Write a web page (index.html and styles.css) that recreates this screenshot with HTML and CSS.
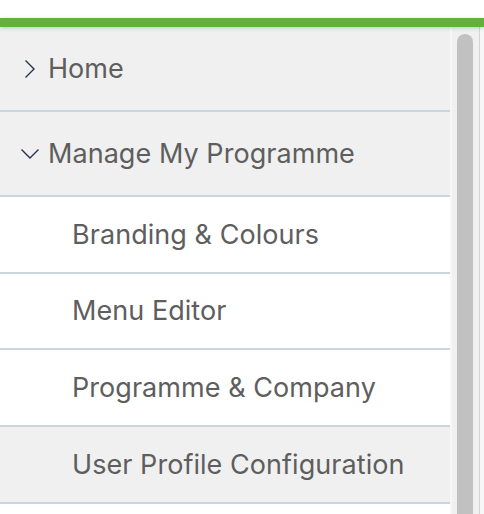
FILE: index.html
```html
<!DOCTYPE html>
<html lang="en">
<head>
<meta charset="utf-8">
<title>Menu</title>
<link rel="stylesheet" href="styles.css">
</head>
<body>
<div class="top"></div>
<div class="accent"></div>
<div class="main">
  <nav class="menu">
    <div class="item parent">
      <svg class="chev" viewBox="0 0 18 18" width="18" height="18"><path d="M4.5 0.5 L13 9 L4.5 17.5" fill="none" stroke="#26324f" stroke-width="1.4"/></svg>
      <span>Home</span>
    </div>
    <div class="item parent">
      <svg class="chev" viewBox="0 0 18 18" width="18" height="18"><path d="M0.5 4.5 L9 13 L17.5 4.5" fill="none" stroke="#26324f" stroke-width="1.4"/></svg>
      <span>Manage My Programme</span>
    </div>
    <div class="item sub">Branding &amp; Colours</div>
    <div class="item sub">Menu Editor</div>
    <div class="item sub">Programme &amp; Company</div>
    <div class="item sub hover">User Profile Configuration</div>
  </nav>
  <div class="scroll"><div class="thumb"></div></div>
  <div class="edge"></div>
</div>
</body>
</html>
```

FILE: styles.css
```css
html, body {
  margin: 0;
  padding: 0;
  background: #ffffff;
  height: 100%;
  overflow: hidden;
}
body {
  font-family: Inter, "Noto Sans", sans-serif;
}
.top {
  height: 18px;
  background: #ffffff;
}
.accent {
  height: 9px;
  background: #62b03f;
  position: relative;
  z-index: 2;
  box-shadow: 0 1px 4px rgba(0, 0, 0, 0.18);
}
.main {
  display: flex;
  height: 487px;
}
.menu {
  width: 451px;
  display: flex;
  flex-direction: column;
}
.item {
  flex: none;
  display: flex;
  align-items: center;
  border-bottom: 2px solid #cbd5de;
  color: #5e5e5e;
  font-size: 27px;
  letter-spacing: 0.05px;
}
.parent {
  height: 83px;
  background: #f0f0f0;
  padding-left: 21px;
  gap: 9px;
}
.sub {
  height: 74.67px;
  background: #ffffff;
  padding-left: 72px;
}
.sub.hover {
  background: #f0f0f0;
}
.chev {
  flex: none;
  display: block;
}
.scroll {
  width: 29px;
  box-sizing: border-box;
  background: #f0f0f0;
  border-left: 2px solid #f7f7f7;
  padding-left: 5px;
  padding-top: 7px;
}
.thumb {
  width: 16px;
  height: 100%;
  background: #c1c1c1;
  border-radius: 8px 8px 0 0;
}
.edge {
  width: 4px;
  border-left: 1px solid #d4d4d4;
  background: #f7f7f7;
}
```
